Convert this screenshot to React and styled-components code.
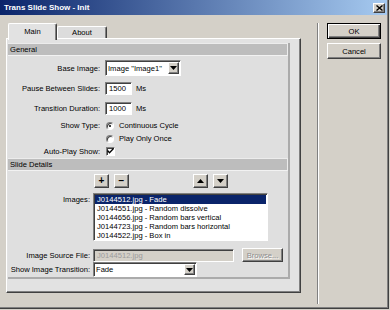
import React from "react";
import styled, { createGlobalStyle, css } from "styled-components";

const GlobalStyle = createGlobalStyle`
  * { box-sizing: border-box; }
  body {
    margin: 0;
    background: #d4d0c8;
    font-family: "Liberation Sans", Arial, sans-serif;
    font-size: 7.6px;
    color: #000;
  }
`;

const raised = css`
  border: 1px solid;
  border-color: #fff #404040 #404040 #fff;
  box-shadow: inset -1px -1px #808080;
  background: #d4d0c8;
`;

const sunken = css`
  border: 1px solid;
  border-color: #808080 #fff #fff #808080;
  box-shadow: inset 1px 1px #404040;
`;

const Window = styled.div`
  width: 389px;
  height: 309px;
  background: #d4d0c8;
  border-right: 1px solid #404040;
  border-bottom: 1px solid #404040;
  box-shadow: inset -1px -1px #808080;
  display: flex;
  flex-direction: column;
  overflow: hidden;
`;

const TitleBar = styled.div`
  height: 15px;
  margin-right: 1px;
  background: linear-gradient(to right, #0a246a, #a6caf0);
  display: flex;
  align-items: center;
  justify-content: space-between;
  padding: 0 2px 0 4px;
`;

const Title = styled.span`
  color: #fff;
  font-weight: bold;
  font-size: 8px;
`;

const CloseButton = styled.div`
  ${raised};
  width: 12px;
  height: 10px;
  display: flex;
  align-items: center;
  justify-content: center;
`;

const Body = styled.div`
  flex: 1;
  display: flex;
  padding-top: 8px;
`;

const TabArea = styled.div`
  margin-left: 6px;
  width: 295px;
  display: flex;
  flex-direction: column;
`;

const TabStrip = styled.div`
  height: 15px;
  display: flex;
  align-items: flex-end;
  padding-left: 2px;
  position: relative;
  z-index: 1;
`;

const Tab = styled.div`
  width: ${({ width }) => width}px;
  height: ${({ active }) => (active ? 17 : 12)}px;
  margin-bottom: ${({ active }) => (active ? -2 : 0)}px;
  background: ${({ active }) => (active ? "#e2e2e2" : "#dcdcdc")};
  border-top: 1px solid #fff;
  border-left: 1px solid #fff;
  border-right: 1px solid #404040;
  box-shadow: inset -1px 0 #808080;
  border-radius: 2px 2px 0 0;
  display: flex;
  align-items: center;
  justify-content: center;
  padding-bottom: ${({ active }) => (active ? 2 : 0)}px;
`;

const Panel = styled.div`
  height: 255px;
  background: #e2e2e2;
  border-top: 1px solid #fff;
  border-left: 1px solid #fff;
  border-right: 1px solid #404040;
  border-bottom: 1px solid #404040;
  box-shadow: inset -1px -1px #808080;
  padding: 4px 10px 13px 1px;
  display: flex;
`;

const Group = styled.div`
  flex: 1;
  background: #dfdfdf;
  border-right: 2px solid #ababab;
  border-bottom: 2px solid #ababab;
  display: flex;
  flex-direction: column;
`;

const SectionHeader = styled.div`
  height: 13px;
  margin-top: ${({ gap }) => gap || 0}px;
  background: #bdbdbd;
  border-top: 1px solid #ececec;
  border-bottom: 1px solid #f2f2f2;
  border-right: 1px solid #ececec;
  padding-left: 2px;
  display: flex;
  align-items: center;
`;

const Fields = styled.div`
  display: flex;
  flex-direction: column;
  padding-top: ${({ top }) => top}px;
`;

const Row = styled.div`
  height: ${({ h }) => h}px;
  margin-top: ${({ gap }) => gap || 0}px;
  display: flex;
  align-items: ${({ top }) => (top ? "flex-start" : "center")};
`;

const Label = styled.div`
  width: ${({ width }) => width}px;
  margin-right: ${({ gap }) => gap}px;
  text-align: right;
  white-space: nowrap;
  padding-top: ${({ top }) => top || 0}px;
`;

const TextBox = styled.div`
  ${sunken};
  width: ${({ width }) => width}px;
  height: 13px;
  background: ${({ disabled }) => (disabled ? "#d4d0c8" : "#fff")};
  color: ${({ disabled }) => (disabled ? "#9c9c9c" : "#000")};
  padding-left: 3px;
  display: flex;
  align-items: center;
`;

const Unit = styled.span`
  margin-left: 4px;
`;

const Select = styled.div`
  ${sunken};
  width: ${({ width }) => width}px;
  height: ${({ h }) => h}px;
  background: #fff;
  display: flex;
  align-items: stretch;
  padding: 1px 1px 1px 2px;
`;

const SelectText = styled.span`
  flex: 1;
  display: flex;
  align-items: center;
  white-space: nowrap;
`;

const DropButton = styled.div`
  ${raised};
  width: 11px;
  display: flex;
  align-items: center;
  justify-content: center;
`;

const RadioRow = styled.label`
  display: flex;
  align-items: center;
  margin-left: 1px;
`;

const RadioDot = styled.span`
  width: 8px;
  height: 8px;
  border-radius: 50%;
  border: 1px solid;
  border-color: #808080 #fff #fff #808080;
  box-shadow: inset 1px 1px #404040;
  background: #fff;
  margin-right: 5px;
  display: flex;
  align-items: center;
  justify-content: center;
  &::after {
    content: "";
    width: 2px;
    height: 2px;
    border-radius: 50%;
    background: ${({ checked }) => (checked ? "#000" : "transparent")};
  }
`;

const CheckBox = styled.span`
  ${sunken};
  width: 9px;
  height: 9px;
  margin-left: 1px;
  background: #fff;
  display: flex;
  align-items: center;
  justify-content: center;
`;

const ToolRow = styled.div`
  display: flex;
  gap: 5px;
  margin-left: ${({ offset }) => offset}px;
`;

const SmallButton = styled.div`
  ${raised};
  width: 15px;
  height: 14px;
  display: flex;
  align-items: center;
  justify-content: center;
  font-weight: bold;
  font-size: 10px;
  line-height: 1;
`;

const ListBox = styled.div`
  ${sunken};
  width: 175px;
  height: 48px;
  background: #fff;
  padding: 1px;
  overflow: hidden;
`;

const ListItem = styled.div`
  height: 9px;
  line-height: 9px;
  padding-left: 2px;
  white-space: nowrap;
  background: ${({ selected }) => (selected ? "#0a246a" : "transparent")};
  color: ${({ selected }) => (selected ? "#fff" : "#000")};
`;

const BrowseButton = styled.div`
  ${raised};
  width: 41px;
  height: 14px;
  margin-left: 8px;
  color: #8c8c8c;
  text-shadow: 1px 1px #fff;
  display: flex;
  align-items: center;
  justify-content: center;
`;

const Separator = styled.div`
  width: 2px;
  height: 281px;
  margin-left: 16px;
  border-left: 1px solid #808080;
  border-right: 1px solid #fff;
`;

const ButtonColumn = styled.div`
  margin-left: 8px;
  display: flex;
  flex-direction: column;
  gap: 4px;
`;

const PushButton = styled.div`
  width: 54px;
  height: 16px;
  display: flex;
  align-items: center;
  justify-content: center;
  background: #d4d0c8;
  ${({ isDefault }) =>
    isDefault
      ? css`
          border: 1px solid #000;
          box-shadow: inset 1px 1px #fff, inset -1px -1px #404040,
            inset -2px -2px #808080;
        `
      : raised};
`;

const Triangle = ({ up }) => (
  <svg width="7" height="4" viewBox="0 0 7 4">
    <path d={up ? "M0 4 L3.5 0 L7 4 Z" : "M0 0 L3.5 4 L7 0 Z"} fill="#000" />
  </svg>
);

const images = [
  "J0144512.jpg - Fade",
  "J0144551.jpg - Random dissolve",
  "J0144656.jpg - Random bars vertical",
  "J0144723.jpg - Random bars horizontal",
  "J0144522.jpg - Box in",
];

const App = () => (
  <>
    <GlobalStyle />
    <Window>
      <TitleBar>
        <Title>Trans Slide Show - Init</Title>
        <CloseButton>
          <svg width="7" height="6" viewBox="0 0 7 6">
            <path d="M0.5 0.5 L6.5 5.5 M6.5 0.5 L0.5 5.5" stroke="#000" strokeWidth="1.4" />
          </svg>
        </CloseButton>
      </TitleBar>
      <Body>
        <TabArea>
          <TabStrip>
            <Tab active width={49}>Main</Tab>
            <Tab width={50}>About</Tab>
          </TabStrip>
          <Panel>
            <Group>
              <SectionHeader>General</SectionHeader>
              <Fields top={2}>
                <Row h={20}>
                  <Label width={92} gap={5}>Base Image:</Label>
                  <Select width={76} h={16}>
                    <SelectText>Image "Image1"</SelectText>
                    <DropButton><Triangle /></DropButton>
                  </Select>
                </Row>
                <Row h={20}>
                  <Label width={92} gap={5}>Pause Between Slides:</Label>
                  <TextBox width={27}>1500</TextBox>
                  <Unit>Ms</Unit>
                </Row>
                <Row h={21}>
                  <Label width={92} gap={5}>Transition Duration:</Label>
                  <TextBox width={27}>1000</TextBox>
                  <Unit>Ms</Unit>
                </Row>
                <Row h={13}>
                  <Label width={92} gap={5}>Show Type:</Label>
                  <RadioRow><RadioDot checked />Continuous Cycle</RadioRow>
                </Row>
                <Row h={13}>
                  <Label width={92} gap={5} />
                  <RadioRow><RadioDot />Play Only Once</RadioRow>
                </Row>
                <Row h={12}>
                  <Label width={92} gap={5}>Auto-Play Show:</Label>
                  <CheckBox>
                    <svg width="7" height="6" viewBox="0 0 7 6">
                      <path d="M0.5 2.5 L2.5 4.8 L6.5 0.5" stroke="#000" strokeWidth="1.3" fill="none" />
                    </svg>
                  </CheckBox>
                </Row>
              </Fields>
              <SectionHeader gap={1}>Slide Details</SectionHeader>
              <Fields top={3}>
                <Row h={14}>
                  <Label width={82} gap={3} />
                  <ToolRow offset={1}>
                    <SmallButton>+</SmallButton>
                    <SmallButton>−</SmallButton>
                  </ToolRow>
                  <ToolRow offset={64}>
                    <SmallButton><Triangle up /></SmallButton>
                    <SmallButton><Triangle /></SmallButton>
                  </ToolRow>
                </Row>
                <Row h={48} gap={5} top>
                  <Label width={82} gap={3} top={2}>Images:</Label>
                  <ListBox>
                    {images.map((name, i) => (
                      <ListItem key={name} selected={i === 0}>{name}</ListItem>
                    ))}
                  </ListBox>
                </Row>
                <Row h={14} gap={7}>
                  <Label width={82} gap={3}>Image Source File:</Label>
                  <TextBox width={141} disabled>J0144512.jpg</TextBox>
                  <BrowseButton>Browse...</BrowseButton>
                </Row>
                <Row h={15}>
                  <Label width={82} gap={3}>Show Image Transition:</Label>
                  <Select width={104} h={15}>
                    <SelectText>Fade</SelectText>
                    <DropButton><Triangle /></DropButton>
                  </Select>
                </Row>
              </Fields>
            </Group>
          </Panel>
        </TabArea>
        <Separator />
        <ButtonColumn>
          <PushButton isDefault>OK</PushButton>
          <PushButton>Cancel</PushButton>
        </ButtonColumn>
      </Body>
    </Window>
  </>
);

export default App;
